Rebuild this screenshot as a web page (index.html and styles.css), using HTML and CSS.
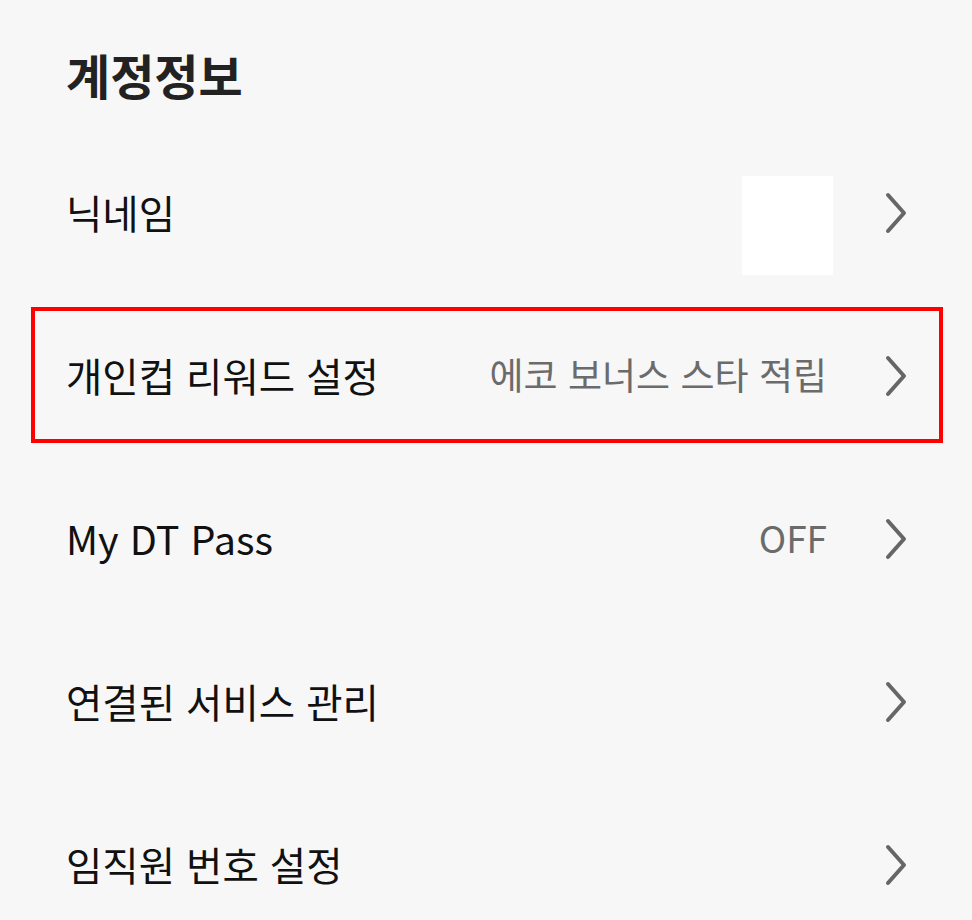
FILE: index.html
```html
<!DOCTYPE html>
<html lang="ko">
<head>
<meta charset="utf-8">
<link rel="stylesheet" href="styles.css">
</head>
<body>
<div class="page">
  <h1 class="title">계정정보</h1>
  <ul class="list">
    <li class="row">
      <span class="label">닉네임</span>
      <span class="value"><span class="avatar"></span></span>
      <svg class="chev" viewBox="0 0 24 44" width="24" height="44"><path d="M4 4 L20 22 L4 40" fill="none" stroke="#666" stroke-width="4" stroke-linecap="round" stroke-linejoin="round"/></svg>
    </li>
    <li class="row highlighted">
      <span class="label">개인컵 리워드 설정</span>
      <span class="value">에코 보너스 스타 적립</span>
      <svg class="chev" viewBox="0 0 24 44" width="24" height="44"><path d="M4 4 L20 22 L4 40" fill="none" stroke="#666" stroke-width="4" stroke-linecap="round" stroke-linejoin="round"/></svg>
    </li>
    <li class="row">
      <span class="label">My DT Pass</span>
      <span class="value">OFF</span>
      <svg class="chev" viewBox="0 0 24 44" width="24" height="44"><path d="M4 4 L20 22 L4 40" fill="none" stroke="#666" stroke-width="4" stroke-linecap="round" stroke-linejoin="round"/></svg>
    </li>
    <li class="row">
      <span class="label">연결된 서비스 관리</span>
      <span class="value"></span>
      <svg class="chev" viewBox="0 0 24 44" width="24" height="44"><path d="M4 4 L20 22 L4 40" fill="none" stroke="#666" stroke-width="4" stroke-linecap="round" stroke-linejoin="round"/></svg>
    </li>
    <li class="row">
      <span class="label">임직원 번호 설정</span>
      <span class="value"></span>
      <svg class="chev" viewBox="0 0 24 44" width="24" height="44"><path d="M4 4 L20 22 L4 40" fill="none" stroke="#666" stroke-width="4" stroke-linecap="round" stroke-linejoin="round"/></svg>
    </li>
  </ul>
</div>
</body>
</html>
```
FILE: styles.css
```css
html, body {
  margin: 0;
  padding: 0;
  background: #f7f7f7;
}
body {
  font-family: "Noto Sans CJK KR", "Noto Sans", sans-serif;
  color: #111;
  width: 972px;
  height: 920px;
  overflow: hidden;
}
.page {
  display: flex;
  flex-direction: column;
}
.title {
  margin: 0;
  height: 131px;
  display: flex;
  align-items: center;
  padding: 16px 0 0 66px;
  box-sizing: border-box;
  font-size: 48px;
  font-weight: 700;
  color: #222;
  letter-spacing: 0;
}
.list {
  list-style: none;
  margin: 0;
  padding: 0;
}
.row {
  position: relative;
  height: 163px;
  display: flex;
  align-items: center;
  padding: 0 64px 0 66px;
  box-sizing: border-box;
}
.label {
  flex: 1;
  font-size: 39.5px;
  color: #111;
  margin-top: -3px;
}
.value {
  font-size: 37px;
  color: #6b6b6b;
  margin-right: 57px;
  margin-top: -3px;
  display: flex;
  align-items: center;
}
.avatar {
  display: block;
  width: 91px;
  height: 99px;
  background: #fff;
  margin-top: 29px;
  margin-right: -6px;
}
.chev {
  display: block;
  flex: none;
}
.highlighted::after {
  content: "";
  position: absolute;
  left: 31px;
  right: 29px;
  top: 13px;
  bottom: 14px;
  border: 4px solid #f00;
}
```
